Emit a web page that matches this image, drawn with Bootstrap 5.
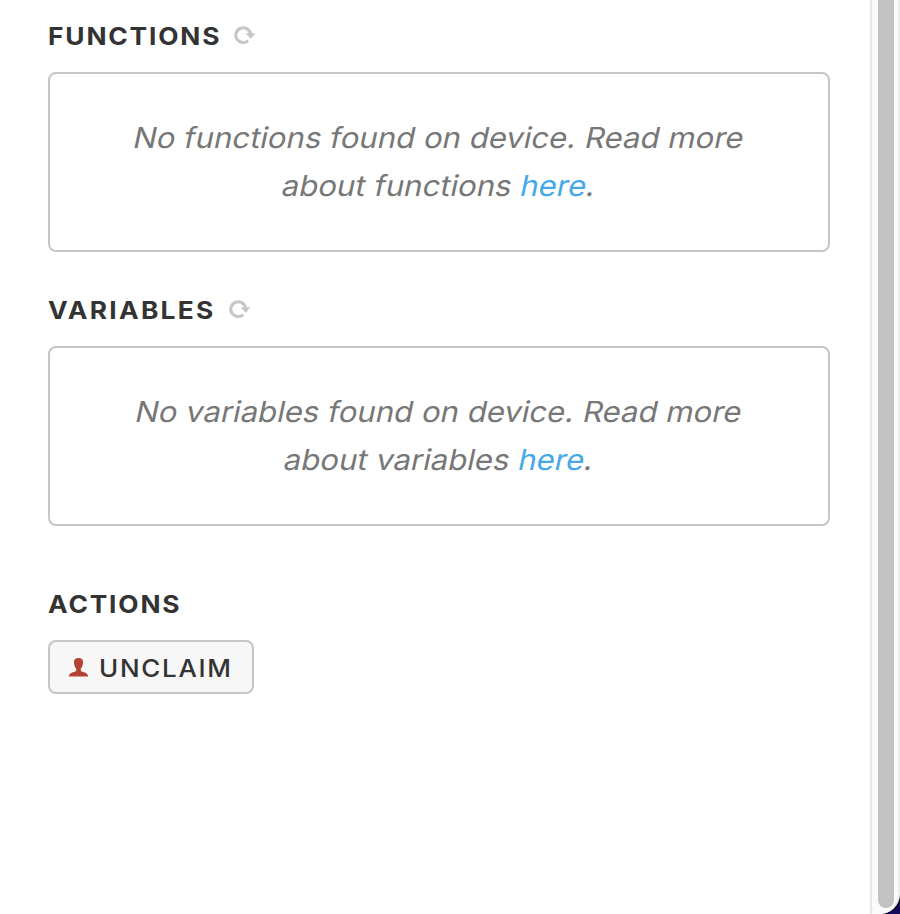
<!DOCTYPE html>
<html lang="en">
<head>
<meta charset="utf-8">
<meta name="viewport" content="width=device-width, initial-scale=1">
<title>Device</title>
<link href="https://cdn.jsdelivr.net/npm/bootstrap@5.3.0/dist/css/bootstrap.min.css" rel="stylesheet">
<style>
body{font-family:Inter,"Open Sans",sans-serif;color:#333;background:#170a5c}
.window{height:914px;background:#fff;border-bottom-right-radius:22px;box-shadow:0 0 0 2px #08051c}
.panel{width:870px;padding:0 40px 0 48px}
/* widened letterforms */
.title{height:30px;font-size:24.5px;line-height:32px;font-weight:700;letter-spacing:1.7px;color:#333;transform:scaleX(1.075);transform-origin:left}
.functions{padding-top:20px}
.variables{padding-top:42px}
.variables .title{letter-spacing:2.1px}
.actions{padding-top:62px}
.refresh{width:22px;height:20px;margin-left:25px;color:#c6c6c6}
.empty{margin-top:22px;height:180px;padding:40px 0;border:2px solid #c6c6c6;border-radius:8px;font-size:29px;line-height:48px;color:#777}
.empty a{color:#45a9e8}
/* slanted, slightly wide text */
.empty p{transform:skewX(-12deg) scaleX(1.073)}
.unclaim{margin-top:22px;height:54px;width:206px;padding:0 0 0 19px;border:2px solid #c6c6c6;border-radius:8px;background:#f7f7f7;color:#333;font-size:24.5px;font-weight:500;letter-spacing:1.6px;line-height:52px}
.unclaim span{height:50px;transform:scaleX(1.06);transform-origin:left}
.unclaim svg{width:19px;height:19px;color:#b34233;margin-right:10.5px}
.track{width:30px;background:#fafafa;border-left:2px solid #e8e8e8;border-right:2px solid #ededed;border-bottom-right-radius:20px;padding:0 4px 6px 6px}
.thumb{width:16px;background:#c2c2c2;border-radius:0 0 8px 8px}
</style>
</head>
<body class="overflow-hidden">
<svg class="d-none"><symbol id="refresh" viewBox="0 0 22 20"><path d="M14.2 15.6A7.4 7.4 0 1 1 16.5 8.8" fill="none" stroke="currentColor" stroke-width="3.1"/><path d="M11.6 8.3H21.5L16.7 13.8Z" fill="currentColor"/></symbol></svg>
<div class="window d-flex">
  <main class="panel">
    <section class="functions">
      <div class="d-flex align-items-center"><h2 class="title m-0">FUNCTIONS</h2><svg class="refresh"><use href="#refresh"/></svg></div>
      <div class="empty text-center"><p class="m-0">No functions found on device. Read more</p><p class="m-0">about functions <a href="#" class="text-decoration-none">here</a>.</p></div>
    </section>
    <section class="variables">
      <div class="d-flex align-items-center"><h2 class="title m-0">VARIABLES</h2><svg class="refresh"><use href="#refresh"/></svg></div>
      <div class="empty text-center"><p class="m-0">No variables found on device. Read more</p><p class="m-0">about variables <a href="#" class="text-decoration-none">here</a>.</p></div>
    </section>
    <section class="actions">
      <h2 class="title m-0">ACTIONS</h2>
      <button class="btn unclaim d-flex align-items-center" type="button"><svg viewBox="0 0 19 19" fill="currentColor"><path d="M9.5 0C6.3 0 4.8 1.7 5 4.5C5.1 7 5.8 9.3 7.2 10.6V13C4.8 14.3 1 14.3 0 17.6V18.6H19V17.6C18 14.3 14.2 14.3 11.8 13V10.6C13.2 9.3 13.9 7 14 4.5C14.2 1.7 12.7 0 9.5 0Z"/></svg><span>UNCLAIM</span></button>
    </section>
  </main>
  <div class="track d-flex"><div class="thumb"></div></div>
</div>
<script src="https://cdn.jsdelivr.net/npm/bootstrap@5.3.0/dist/js/bootstrap.bundle.min.js"></script>
</body>
</html>
